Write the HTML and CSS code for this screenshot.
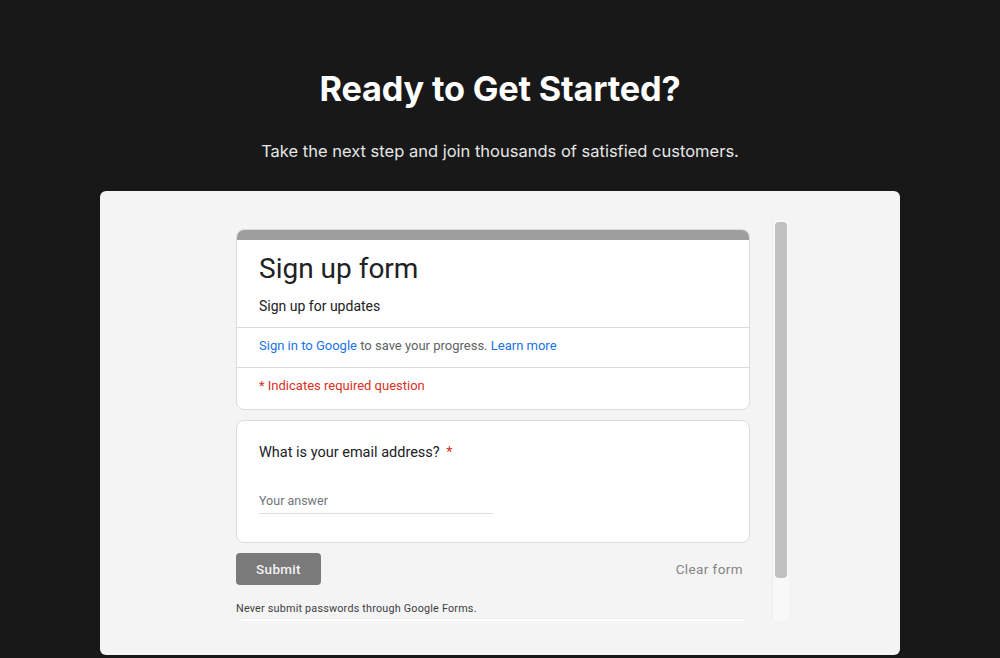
FILE: index.html
```html
<!DOCTYPE html>
<html lang="en">
<head>
  <meta charset="UTF-8" />
  <meta name="viewport" content="width=device-width, initial-scale=1.0">
  <title>Ready to Get Started?</title>
  <link rel="stylesheet" href="styles.css">
</head>
<body>

  <!-- Chamada para ação -->
  <section class="cta">
    <h1>Ready to Get Started?</h1>
    <p class="lead">Take the next step and join thousands of satisfied customers.</p>

    <div class="panel">
      <div class="frame">
        <div class="form-view">

          <div class="card card-head">
            <div class="card-top"></div>
            <div class="head-main">
              <h2>Sign up form</h2>
              <p>Sign up for updates</p>
            </div>
            <div class="head-row">
              <a href="#">Sign in to Google</a> to save your progress. <a href="#">Learn more</a>
            </div>
            <div class="head-row required">* Indicates required question</div>
          </div>

          <div class="card card-question">
            <div class="question">What is your email address? <span class="star">*</span></div>
            <div class="answer">Your answer</div>
          </div>

          <div class="actions">
            <button class="submit-btn">Submit</button>
            <button class="clear-btn">Clear form</button>
          </div>

          <p class="notice">Never submit passwords through Google Forms.</p>
          <div class="card card-next"></div>
        </div>

        <div class="scrollbar"><div class="thumb"></div></div>
      </div>
    </div>
  </section>

</body>
</html>
```

FILE: styles.css
```css
:root {
  --bg: #181818;
  --panel: #f4f4f4;
  --text: #202124;
  --muted: #5f6368;
  --blue: #1a73e8;
  --red: #d93025;
}
body, html {
  margin: 0; padding: 0;
  background: var(--bg);
  font-family: 'Inter', sans-serif;
  height: 100%;
  overflow: hidden;
}
.cta {
  display: flex;
  flex-direction: column;
  align-items: center;
  padding-top: 67px;
}
.cta h1 {
  margin: 0;
  color: #fff;
  font-size: 34.3px;
  font-weight: 700;
  line-height: 44px;
  letter-spacing: -0.2px;
}
.lead {
  margin: 27px 0 0;
  color: #e6e6e6;
  font-size: 16.5px;
  line-height: 26px;
}
.panel {
  margin-top: 27px;
  width: 800px;
  box-sizing: border-box;
  background: var(--panel);
  border-radius: 6px;
  padding: 29px 0 34px 136px;
}
.frame {
  display: flex;
  height: 401px;
  overflow: hidden;
  font-family: 'Roboto', sans-serif;
}
.form-view {
  width: 514px;
  padding-top: 9px;
  margin-right: 22px;
}
.card {
  background: #fff;
  border: 1px solid #dadce0;
  border-radius: 8px;
  overflow: hidden;
}
.card-top {
  height: 10px;
  background: #9e9e9e;
}
.head-main {
  padding: 11px 22px 11px;
  border-bottom: 1px solid #dadce0;
}
.head-main h2 {
  margin: 0;
  font-size: 28px;
  font-weight: 400;
  line-height: 36px;
  color: var(--text);
}
.head-main p {
  margin: 9px 0 0;
  font-size: 14px;
  line-height: 20px;
  color: var(--text);
}
.head-row {
  padding: 8px 22px 11px;
  font-size: 13px;
  line-height: 20px;
  color: var(--muted);
}
.head-row + .head-row {
  border-top: 1px solid #dadce0;
}
.head-row a {
  color: var(--blue);
  text-decoration: none;
}
.required {
  color: var(--red);
  padding-bottom: 13px;
}
.card-question {
  margin-top: 10px;
  padding: 20px 22px 28px;
}
.question {
  font-size: 14.5px;
  line-height: 24px;
  color: var(--text);
}
.star {
  color: var(--red);
  margin-left: 3px;
}
.answer {
  margin-top: 26px;
  width: 234px;
  font-size: 12.5px;
  line-height: 20px;
  color: #70757a;
  padding-bottom: 2px;
  border-bottom: 1px solid #e0e0e0;
}
.actions {
  display: flex;
  justify-content: space-between;
  align-items: center;
  margin-top: 10px;
}
.submit-btn {
  width: 85px;
  height: 32px;
  border: none;
  border-radius: 4px;
  background: #7a7a7a;
  color: #f2f2f2;
  font-family: 'Roboto', sans-serif;
  font-size: 13.5px;
  font-weight: 500;
  letter-spacing: 0.3px;
}
.clear-btn {
  border: none;
  background: none;
  color: #858585;
  font-family: 'Roboto', sans-serif;
  font-size: 13.5px;
  font-weight: 400;
  letter-spacing: 0.4px;
  padding: 0 7px 0 0;
}
.notice {
  margin: 15px 0 0;
  font-size: 10.8px;
  line-height: 18px;
  letter-spacing: 0.2px;
  color: #3c4043;
}
.card-next {
  margin-top: 0;
  height: 40px;
  border-color: #ececec;
}
.scrollbar {
  width: 12px;
  border-left: 1px solid #ececec;
  background: #f8f8f8;
  padding: 2px 2px 0 2px;
}
.thumb {
  height: 356px;
  border-radius: 4px;
  background: #c1c1c1;
}
```
